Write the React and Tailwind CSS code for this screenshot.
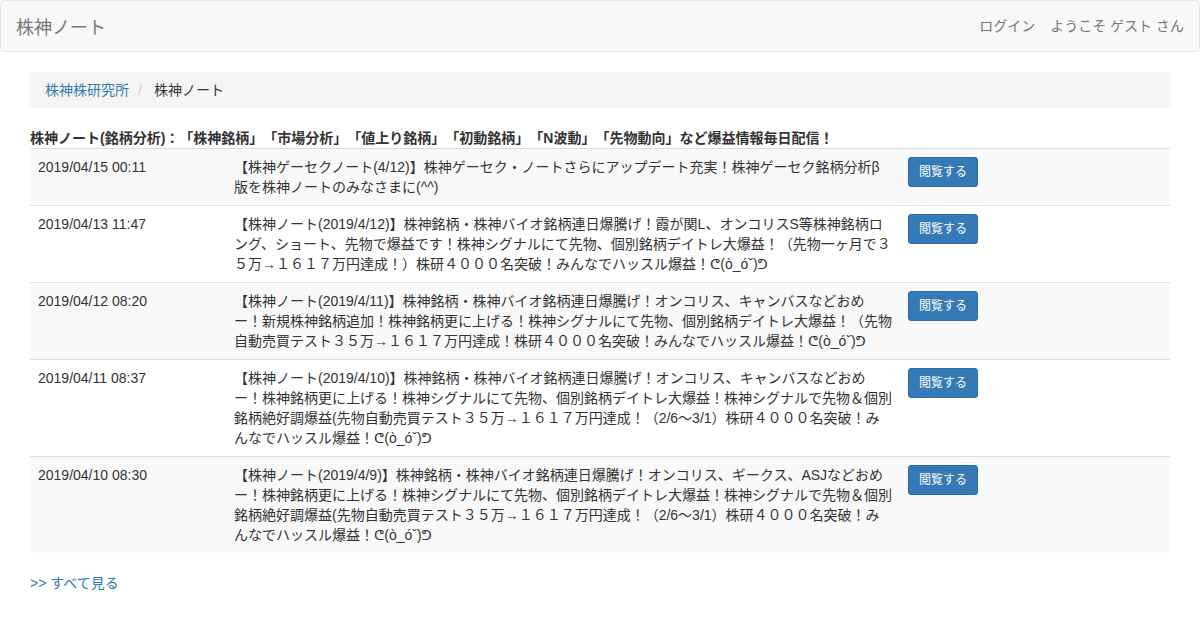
const notes = [
  {
    date: '2019/04/15 00:11',
    title: '【株神ゲーセクノート(4/12)】株神ゲーセク・ノートさらにアップデート充実！株神ゲーセク銘柄分析β版を株神ノートのみなさまに(^^)',
  },
  {
    date: '2019/04/13 11:47',
    title: '【株神ノート(2019/4/12)】株神銘柄・株神バイオ銘柄連日爆騰げ！霞が関L、オンコリスS等株神銘柄ロング、ショート、先物で爆益です！株神シグナルにて先物、個別銘柄デイトレ大爆益！（先物一ヶ月で３５万→１６１７万円達成！）株研４０００名突破！みんなでハッスル爆益！ᕦ(ò_óˇ)ᕤ',
  },
  {
    date: '2019/04/12 08:20',
    title: '【株神ノート(2019/4/11)】株神銘柄・株神バイオ銘柄連日爆騰げ！オンコリス、キャンバスなどおめー！新規株神銘柄追加！株神銘柄更に上げる！株神シグナルにて先物、個別銘柄デイトレ大爆益！（先物自動売買テスト３５万→１６１７万円達成！株研４０００名突破！みんなでハッスル爆益！ᕦ(ò_óˇ)ᕤ',
  },
  {
    date: '2019/04/11 08:37',
    title: '【株神ノート(2019/4/10)】株神銘柄・株神バイオ銘柄連日爆騰げ！オンコリス、キャンバスなどおめー！株神銘柄更に上げる！株神シグナルにて先物、個別銘柄デイトレ大爆益！株神シグナルで先物＆個別銘柄絶好調爆益(先物自動売買テスト３５万→１６１７万円達成！（2/6～3/1）株研４０００名突破！みんなでハッスル爆益！ᕦ(ò_óˇ)ᕤ',
  },
  {
    date: '2019/04/10 08:30',
    title: '【株神ノート(2019/4/9)】株神銘柄・株神バイオ銘柄連日爆騰げ！オンコリス、ギークス、ASJなどおめー！株神銘柄更に上げる！株神シグナルにて先物、個別銘柄デイトレ大爆益！株神シグナルで先物＆個別銘柄絶好調爆益(先物自動売買テスト３５万→１６１７万円達成！（2/6～3/1）株研４０００名突破！みんなでハッスル爆益！ᕦ(ò_óˇ)ᕤ',
  },
];

export default function App() {
  return (
    <div className="min-h-[630px] bg-white text-[14px] leading-[20px] text-[#333] [text-spacing-trim:space-all] font-['Liberation_Sans','Noto_Sans_CJK_JP','DejaVu_Sans',sans-serif]">
      {/* navbar */}
      <nav className="flex h-[52px] items-center justify-between rounded-[4px] border border-[#e7e7e7] bg-[#f8f8f8] pl-[15px] pr-[15px]">
        <a className="mt-[3px] text-[18px] leading-[20px] text-[#777]">株神ノート</a>
        <div className="flex gap-[15px] text-[#777]">
          <a>ログイン</a>
          <span>ようこそ ゲスト さん</span>
        </div>
      </nav>

      <div className="mx-auto mt-[20px] w-[1170px] px-[15px]">
        <ol className="mb-[20px] flex rounded-[4px] bg-[#f5f5f5] px-[15px] py-[8px]">
          <li>
            <a className="text-[#337ab7]">株神株研究所</a>
          </li>
          <li className="text-[#333]">
            <span className="pl-[9px] pr-[12px] text-[#ccc]">/</span>
            <span>株神ノート</span>
          </li>
        </ol>

        <div className="font-bold">
          株神ノート(銘柄分析)：「株神銘柄」「市場分析」「値上り銘柄」「初動銘柄」「N波動」「先物動向」など爆益情報毎日配信！
        </div>

        <table className="mb-[20px] w-full border-collapse">
          <tbody>
            {notes.map((n, i) => (
              <tr key={n.date} className={i % 2 === 0 ? 'bg-[#f9f9f9]' : 'bg-white'}>
                <td className="w-[196px] border-t border-[#ddd] p-[8px] align-top">{n.date}</td>
                <td className="w-[674px] border-t border-[#ddd] p-[8px] align-top">{n.title}</td>
                <td className="border-t border-[#ddd] p-[8px] align-top">
                  <button className="rounded-[3px] border border-[#2e6da4] bg-[#337ab7] px-[10px] py-[5px] text-[12px] leading-[18px] text-white">
                    閲覧する
                  </button>
                </td>
              </tr>
            ))}
          </tbody>
        </table>

        <a className="text-[#337ab7]">&gt;&gt; すべて見る</a>
      </div>
    </div>
  );
}
